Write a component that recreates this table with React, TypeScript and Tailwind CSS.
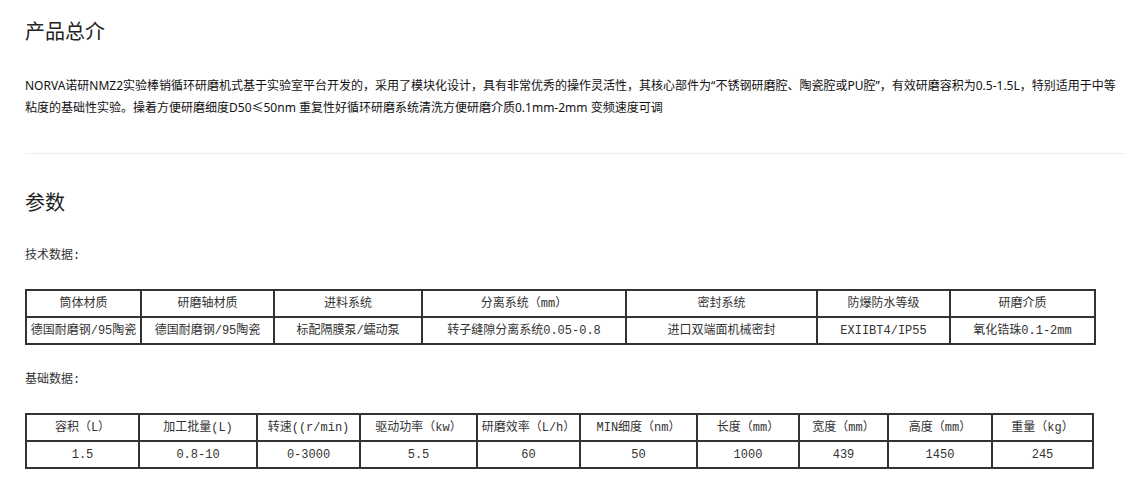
import React from 'react';

const techHead = ['筒体材质', '研磨轴材质', '进料系统', '分离系统（mm）', '密封系统', '防爆防水等级', '研磨介质'];
const techRow = ['德国耐磨钢/95陶瓷', '德国耐磨钢/95陶瓷', '标配隔膜泵/蠕动泵', '转子缝隙分离系统0.05-0.8', '进口双端面机械密封', 'EXIIBT4/IP55', '氧化锆珠0.1-2mm'];
const techCols = [115, 133, 148, 204, 191, 133, 145];

const baseHead = ['容积（L）', '加工批量(L)', '转速((r/min)', '驱动功率（kw）', '研磨效率（L/h）', 'MIN细度（nm）', '长度（mm）', '宽度（mm）', '高度（mm）', '重量（kg）'];
const baseRow = ['1.5', '0.8-10', '0-3000', '5.5', '60', '50', '1000', '439', '1450', '245'];
const baseCols = [113, 118, 103, 117, 103, 117, 102, 89, 104, 101];

const cellFont = { fontFamily: '"Liberation Mono", "Noto Sans CJK SC", monospace' };

const DataTable: React.FC<{ cols: number[]; head: string[]; row: string[] }> = ({ cols, head, row }) => (
    <table className="border-collapse table-fixed text-[12px] text-[#333]" style={{ ...cellFont, width: cols.reduce((a, b) => a + b, 0) }}>
        <colgroup>
            {cols.map((w, i) => (
                <col key={i} style={{ width: w }} />
            ))}
        </colgroup>
        <tbody>
            <tr>
                {head.map((h, i) => (
                    <td key={i} className="border-2 border-[#333] h-[27px] p-0 text-center whitespace-nowrap">{h}</td>
                ))}
            </tr>
            <tr>
                {row.map((c, i) => (
                    <td key={i} className="border-2 border-[#333] h-[27px] p-0 text-center whitespace-nowrap">{c}</td>
                ))}
            </tr>
        </tbody>
    </table>
);

const App: React.FC = () => {
    return (
        <div className="bg-white min-h-[490px] text-[#333]" style={{ fontFamily: '"Noto Sans", "Noto Sans CJK SC", sans-serif' }}>
            <div className="ml-[25px] w-[1100px] pt-[18px]">
                <h2 className="text-[20px] leading-[28px] text-[#222]">产品总介</h2>
                <p className="mt-[29px] text-[12px] leading-[22px] text-[#111]">
                    NORVA诺研NMZ2实验棒销循环研磨机式基于实验室平台开发的，采用了模块化设计，具有非常优秀的操作灵活性，其核心部件为“不锈钢研磨腔、陶瓷腔或PU腔”，有效研磨容积为0.5-1.5L，特别适用于中等粘度的基础性实验。操着方便研磨细度D50≤50nm 重复性好循环研磨系统清洗方便研磨介质0.1mm-2mm 变频速度可调
                </p>
                <div className="mt-[34px] border-t border-[#eee]" />
                <h2 className="mt-[35px] text-[20px] leading-[28px] text-[#222]">参数</h2>
                <div className="mt-[29px] text-[12px] leading-[20px]" style={cellFont}>技术数据:</div>
                <div className="mt-[23px]">
                    <DataTable cols={techCols} head={techHead} row={techRow} />
                </div>
                <div className="mt-[25px] text-[12px] leading-[20px]" style={cellFont}>基础数据:</div>
                <div className="mt-[23px]">
                    <DataTable cols={baseCols} head={baseHead} row={baseRow} />
                </div>
            </div>
        </div>
    );
};

export default App;
